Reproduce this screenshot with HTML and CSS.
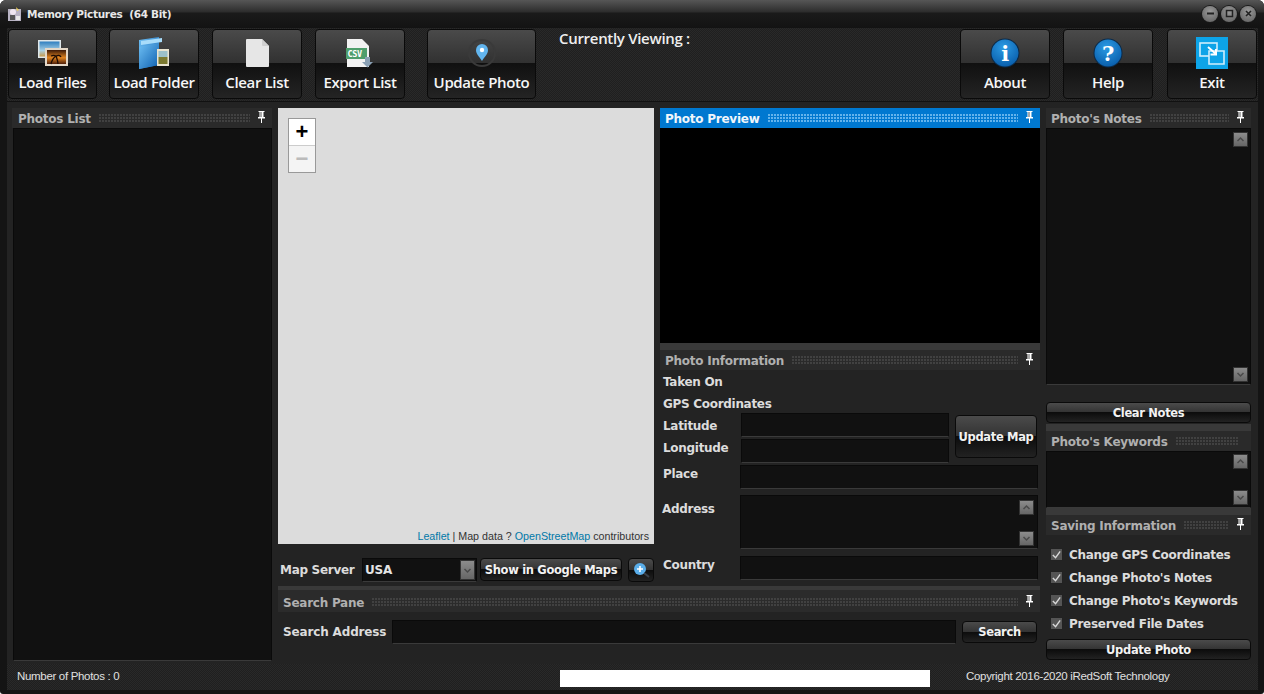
FILE: index.html
```html
<!DOCTYPE html>
<html lang="en">
<head>
<meta charset="utf-8">
<title>Memory Pictures</title>
<link rel="stylesheet" href="styles.css">
</head>
<body>
<svg class="defs" width="0" height="0" aria-hidden="true">
  <defs>
    <symbol id="pin" viewBox="0 0 9 12"><path d="M1.500 0h6v1h-1v5H8v1.500H5V12H4V7.500H1V6h1.500V1h-1z" fill="#fff"/><rect x="3.500" y="1" width="1" height="5" fill="#555"/></symbol>
    <symbol id="up" viewBox="0 0 15 15"><path d="M4.500 9 7.500 6l3 3" fill="none" stroke="#4a4a4a" stroke-width="1.500"/></symbol>
    <symbol id="down" viewBox="0 0 15 15"><path d="M4.500 6l3 3 3-3" fill="none" stroke="#4a4a4a" stroke-width="1.500"/></symbol>
    <linearGradient id="sky" x1="0" y1="0" x2="0" y2="1"><stop offset="0" stop-color="#2f7fc0"/><stop offset=".6" stop-color="#a8d0e4"/><stop offset="1" stop-color="#c79a4a"/></linearGradient>
    <linearGradient id="sunset" x1="0" y1="0" x2="0" y2="1"><stop offset="0" stop-color="#3a1808"/><stop offset=".55" stop-color="#e08420"/><stop offset="1" stop-color="#50200a"/></linearGradient>
    <linearGradient id="folder" x1="0" y1="0" x2="1" y2="1"><stop offset="0" stop-color="#6fc0f4"/><stop offset="1" stop-color="#0d5fb0"/></linearGradient>
    <radialGradient id="orb" cx=".45" cy=".3" r=".8"><stop offset="0" stop-color="#2c9be4"/><stop offset="1" stop-color="#0557a5"/></radialGradient>
  </defs>
</svg>
<div class="window">
  <header class="titlebar">
    <svg class="app-icon" width="15" height="16" viewBox="0 0 15 16"><rect x="1" y="3" width="13" height="12" fill="#b9b4c4"/><rect x="3" y="9" width="5" height="5" fill="#555"/><circle cx="6" cy="6" r="3" fill="#efe6f0"/><path d="M9 1l3 3-2 1z" fill="#f2d35a"/><rect x="9" y="10" width="4" height="4" fill="#e8e8e8"/></svg>
    <span class="app-title">Memory Pictures&nbsp; (64 Bit)</span>
    <div class="win-buttons">
      <span class="win-btn"><svg width="9" height="9" viewBox="0 0 9 9"><rect x="1" y="3.500" width="7" height="2" fill="#222"/></svg></span>
      <span class="win-btn"><svg width="9" height="9" viewBox="0 0 9 9"><rect x="1.500" y="1.500" width="6" height="6" fill="none" stroke="#222" stroke-width="1.500"/></svg></span>
      <span class="win-btn"><svg width="9" height="9" viewBox="0 0 9 9"><path d="M2 2l5 5M7 2l-5 5" stroke="#222" stroke-width="1.600"/></svg></span>
    </div>
  </header>

  <nav class="toolbar">
    <button class="tool w89">
      <svg class="tool-icon" width="32" height="30" viewBox="0 0 32 30"><rect x="1" y="2" width="23" height="18" fill="#dfe7ea"/><rect x="2.500" y="3.500" width="20" height="15" fill="url(#sky)"/><rect x="8" y="10" width="23" height="18" fill="#e4d8c8"/><rect x="10" y="12" width="19" height="14" fill="url(#sunset)"/><path d="M14 26c1-4 2-6 5-8M19 18c-2-1-3-1-5 0M19 18c2-1 4-1 5 1M19 18c1 3 2 5 2 8" stroke="#1d0c04" stroke-width="1.300" fill="none"/></svg>
      <span>Load Files</span>
    </button>
    <button class="tool w90 gap12">
      <svg class="tool-icon" width="32" height="32" viewBox="0 0 32 32"><path d="M1 3 21 0v28L1 32z" fill="url(#folder)"/><path d="M3 4 24 1v4L3 8z" fill="#a8dcfa"/><path d="M1 10 21 6v22L1 32z" fill="url(#folder)"/><rect x="19" y="12" width="12" height="17" fill="#e9e4d0"/><rect x="20.500" y="14" width="9" height="6" fill="#9cc0c8"/><rect x="20.500" y="20" width="9" height="7" fill="#7c7a30"/></svg>
      <span>Load Folder</span>
    </button>
    <button class="tool w90 gap13">
      <svg class="tool-icon" width="24" height="30" viewBox="0 0 24 30"><path d="M1 2a1 1 0 0 1 1-1h15l7 7v20a1 1 0 0 1-1 1H2a1 1 0 0 1-1-1z" fill="#e6e6e6"/><path d="M17 1l7 7h-6a1 1 0 0 1-1-1z" fill="#cfcfcf"/></svg>
      <span>Clear List</span>
    </button>
    <button class="tool w90 gap13">
      <svg class="tool-icon" width="30" height="30" viewBox="0 0 30 30"><path d="M2 1h15l7 7v21H2z" fill="#f2f2f2"/><rect x="1" y="10" width="21" height="11" fill="#4f9e6c"/><text x="2.500" y="19" class="csv">CSV</text><rect x="20" y="19" width="5" height="6" fill="#8aa0b4"/><path d="M17 24h11l-5.500 5.500z" fill="#8aa0b4"/></svg>
      <span>Export List</span>
    </button>
    <button class="tool w109 gap22">
      <svg class="tool-icon" width="30" height="30" viewBox="0 0 30 30"><circle cx="15" cy="15" r="13" fill="none" stroke="#3a3a3a" stroke-width="2"/><path d="M15 23c-3-5-6-7-6-11a6 6 0 0 1 12 0c0 4-3 6-6 11z" fill="#62b5ee"/><circle cx="15" cy="12" r="2.200" fill="#fff"/></svg>
      <span>Update Photo</span>
    </button>
    <div class="viewing">Currently Viewing :</div>
    <button class="tool w90">
      <svg class="tool-icon" width="30" height="30" viewBox="0 0 30 30"><circle cx="15" cy="15" r="14.500" fill="#0b2a48"/><circle cx="15" cy="15" r="13.500" fill="url(#orb)"/><text x="15" y="23" class="glyph">i</text></svg>
      <span>About</span>
    </button>
    <button class="tool w90 gap13">
      <svg class="tool-icon" width="30" height="30" viewBox="0 0 30 30"><circle cx="15" cy="15" r="14.500" fill="#0b2a48"/><circle cx="15" cy="15" r="13.500" fill="url(#orb)"/><text x="15" y="23" class="glyph">?</text></svg>
      <span>Help</span>
    </button>
    <button class="tool w90 gap14">
      <svg class="tool-icon" width="32" height="32" viewBox="0 0 32 32"><rect width="32" height="32" fill="#0da4e8"/><rect x="4" y="6" width="17" height="13" fill="none" stroke="#cfeefc" stroke-width="1.600"/><path d="M13 14h15v13H13z" fill="#0da4e8" stroke="#cfeefc" stroke-width="1.600"/><path d="M12 10l8 7m0-5v5.500h-5.500" fill="none" stroke="#fff" stroke-width="2"/></svg>
      <span>Exit</span>
    </button>
  </nav>

  <main class="workspace">
    <section class="col-list">
      <div class="pane-head"><b>Photos List</b><i class="dots"></i><svg class="pin"><use href="#pin"/></svg></div>
      <div class="well list-well"></div>
    </section>

    <div class="col-center">
      <div class="center-top">
        <div class="col-map">
          <div class="map">
            <div class="zoom-ctl">
              <span class="zoom-in">+</span>
              <span class="zoom-out">&minus;</span>
            </div>
            <div class="attrib"><a>Leaflet</a> | Map data ? <a>OpenStreetMap</a> contributors</div>
          </div>
          <div class="map-row">
            <label class="lbl map-lbl">Map Server</label>
            <div class="select well"><span>USA</span><span class="sb"><svg width="15" height="20"><use href="#down" y="3" width="15" height="15"/></svg></span></div>
            <button class="btn gmaps">Show in Google Maps</button>
            <button class="btn zoom-btn"><svg width="18" height="18" viewBox="0 0 18 18"><circle cx="8" cy="8" r="6" fill="#5aaeea"/><path d="M8 5v6M5 8h6" stroke="#fff" stroke-width="1.600"/><path d="M12 12l5 4" stroke="#3a4048" stroke-width="2"/></svg></button>
          </div>
        </div>

        <div class="col-photo">
          <div class="pane-head active"><b>Photo Preview</b><i class="dots"></i><svg class="pin"><use href="#pin"/></svg></div>
          <div class="preview"></div>
          <div class="band b7"></div>
          <div class="pane-head"><b>Photo Information</b><i class="dots"></i><svg class="pin"><use href="#pin"/></svg></div>
          <div class="info">
            <div class="info-line lbl">Taken On</div>
            <div class="info-line lbl">GPS Coordinates</div>
            <div class="latlon">
              <div class="latlon-labels">
                <div class="info-line lbl">Latitude</div>
                <div class="info-line lbl">Longitude</div>
              </div>
              <div class="latlon-fields">
                <div class="well field"></div>
                <div class="well field"></div>
              </div>
              <button class="btn update-map">Update Map</button>
            </div>
            <div class="info-row place"><span class="lbl">Place</span><div class="well wide h23"></div></div>
            <div class="info-row address"><span class="lbl addr-lbl">Address</span>
              <div class="well wide h54 scroll"><span class="sb"><svg width="15" height="15"><use href="#up"/></svg></span><span class="sb"><svg width="15" height="15"><use href="#down"/></svg></span></div>
            </div>
            <div class="info-row country"><span class="lbl">Country</span><div class="well wide h23"></div></div>
          </div>
        </div>
      </div>

      <div class="band b4"></div>
      <div class="pane-head search-head"><b>Search Pane</b><i class="dots"></i><svg class="pin"><use href="#pin"/></svg></div>
      <div class="search-row">
        <label class="lbl search-lbl">Search Address</label>
        <div class="well search-field"></div>
        <button class="btn search-btn">Search</button>
      </div>
    </div>

    <aside class="col-right">
      <div class="pane-head"><b>Photo's Notes</b><i class="dots"></i><svg class="pin"><use href="#pin"/></svg></div>
      <div class="well notes scroll"><span class="sb"><svg width="15" height="15"><use href="#up"/></svg></span><span class="sb"><svg width="15" height="15"><use href="#down"/></svg></span></div>
      <button class="btn long clear-notes">Clear Notes</button>
      <div class="band b7 kw-band"></div>
      <div class="pane-head"><b>Photo's Keywords</b><i class="dots"></i></div>
      <div class="well keywords scroll"><span class="sb"><svg width="15" height="15"><use href="#up"/></svg></span><span class="sb"><svg width="15" height="15"><use href="#down"/></svg></span></div>
      <div class="band b7"></div>
      <div class="pane-head"><b>Saving Information</b><i class="dots"></i><svg class="pin"><use href="#pin"/></svg></div>
      <ul class="checks">
        <li><span class="check"><svg width="12" height="12" viewBox="0 0 12 12"><path d="M2 6l3 3 5-7" fill="none" stroke="#d8d8d8" stroke-width="1.500"/></svg></span>Change GPS Coordinates</li>
        <li><span class="check"><svg width="12" height="12" viewBox="0 0 12 12"><path d="M2 6l3 3 5-7" fill="none" stroke="#d8d8d8" stroke-width="1.500"/></svg></span>Change Photo's Notes</li>
        <li><span class="check"><svg width="12" height="12" viewBox="0 0 12 12"><path d="M2 6l3 3 5-7" fill="none" stroke="#d8d8d8" stroke-width="1.500"/></svg></span>Change Photo's Keywords</li>
        <li><span class="check"><svg width="12" height="12" viewBox="0 0 12 12"><path d="M2 6l3 3 5-7" fill="none" stroke="#d8d8d8" stroke-width="1.500"/></svg></span>Preserved File Dates</li>
      </ul>
      <button class="btn long">Update Photo</button>
    </aside>
  </main>

  <footer class="statusbar">
    <span class="count">Number of Photos : 0</span>
    <div class="progress"></div>
    <span class="copyright">Copyright 2016-2020 iRedSoft Technology</span>
  </footer>
</div>
</body>
</html>
```

FILE: styles.css
```css
* { box-sizing: border-box; }
html, body { margin: 0; height: 100%; background: #fff; overflow: hidden; }
.defs { display: block; height: 0; }
.window {
  width: 1264px; height: 694px; background: #141414;
  border-radius: 6px 6px 3px 3px; overflow: hidden;
  display: flex; flex-direction: column;
  padding: 0 6px 4px 7px;
  font-family: "DejaVu Sans", sans-serif;
}
.titlebar {
  height: 28px; margin: 0 -6px 0 -7px; padding: 0 6px 0 7px;
  display: flex; align-items: center;
  background: linear-gradient(#565656 0, #2c2c2c 12px, #1a1a1a 13px, #131313 28px);
}
.app-icon { margin-right: 5px; flex: none; }
.app-title { font: bold 10.500px "DejaVu Sans", sans-serif; color: #e8e8e8; letter-spacing: -.3px; }
.win-buttons { margin-left: auto; display: flex; gap: 3px; margin-right: 2px; margin-top: -1px; }
.win-btn {
  width: 16px; height: 16px; border-radius: 50%;
  background: radial-gradient(circle at 50% 35%, #9a9a9a, #5c5c5c);
  box-shadow: 0 0 0 1px #1a1a1a;
  display: flex; align-items: center; justify-content: center;
}
.toolbar, .statusbar {
  background-color: #232323;
  background-image: repeating-conic-gradient(#292929 0 25%, #1f1f1f 0 50%);
  background-size: 2px 2px;
}
.toolbar {
  height: 74px; flex: none; display: flex; align-items: flex-start;
  padding: 1px 0 0 1px; border-bottom: 1px solid #111;
}
.tool {
  height: 70px; padding: 0; display: flex; flex-direction: column; align-items: center;
  border: 1px solid #0a0a0a; border-radius: 4px; color: #f6f6f6;
  background: linear-gradient(#4a4a4a 0, #313131 33px, #101010 33px, #242424 100%);
  font: 600 15px "Open Sans", sans-serif; letter-spacing: -.35px;
}
.tool-icon { height: 32px; margin-top: 7px; }
.tool span { margin-top: auto; margin-bottom: 6px; line-height: 20px; white-space: nowrap; }
.w89 { width: 89px; margin-right: 12px; }
.w90 { width: 90px; }
.w109 { width: 109px; }
.gap13 { margin-left: 13px; }
.gap14 { margin-left: 14px; }
.gap22 { margin-left: 22px; }
.viewing { margin-left: 23px; margin-right: auto; font: 600 15px/19px "Open Sans", sans-serif; letter-spacing: -.3px; color: #eee; }
.toolbar > .tool:last-child { margin-right: 1px; }

.workspace { flex: 1; display: flex; min-height: 0; background: #232323; padding: 6px 0 3px 6px; }
.col-list { width: 259px; margin-right: 6px; display: flex; flex-direction: column; }
.col-center { width: 762px; margin-right: 6px; display: flex; flex-direction: column; }
.col-right { width: 205px; display: flex; flex-direction: column; }

.pane-head { height: 20px; flex: none; display: flex; align-items: center; padding: 1px 5px 0; color: #b0b0b0; background: #2a2a2a; }
.pane-head b { font: bold 12px "DejaVu Sans", sans-serif; letter-spacing: -.25px; white-space: nowrap; }
.dots {
  flex: 1; height: 9px; margin: 0 7px 0 8px;
  background-image: radial-gradient(circle at 1px 1px, #414141 .8px, transparent 1px); background-size: 3px 3px;
}
.pin { width: 9px; height: 12px; flex: none; margin: -3px 1px 0 0; }
.active { background: #0078d0; color: #f0f6fb; }
.active .dots { background-image: radial-gradient(circle at 1px 1px, #63b3ec .8px, transparent 1px); }
.col-list > .pane-head { margin-left: -1px; padding-left: 6px; }
.well { background: #111; border: 1px solid #0a0a0a; border-bottom-color: #3a3a3a; }
.list-well { flex: 1; }
.band { flex: none; background: #393939; }
.b7 { height: 7px; }
.b4 { height: 4px; }

.center-top { display: flex; gap: 6px; height: 478px; flex: none; }
.col-map { width: 376px; display: flex; flex-direction: column; }
.map { height: 436px; background: #dcdcdc; padding: 10px; display: flex; flex-direction: column; justify-content: space-between; align-items: flex-start; }
.zoom-ctl { width: 28px; height: 55px; border: 1px solid #999; display: flex; flex-direction: column; background: #fff; }
.zoom-in, .zoom-out { flex: none; display: flex; align-items: center; justify-content: center; font: bold 22px "Liberation Sans", sans-serif; color: #000; }
.zoom-in { height: 26px; }
.zoom-out { height: 27px; background: #f4f4f4; color: #bbb; border-top: 1px solid #ccc; }
.attrib { align-self: flex-end; margin: 0 -5px -9px 0; font: 10.700px/14px "Liberation Sans", sans-serif; color: #333; }
.attrib a { color: #0078a8; }
.map-row { flex: 1; display: flex; align-items: center; padding: 9px 0 0 2px; }
.lbl { font: bold 12px "DejaVu Sans", sans-serif; color: #dcdcdc; letter-spacing: -.3px; white-space: nowrap; }
.map-lbl { width: 82px; }
.search-lbl { letter-spacing: -.15px; }
.select { width: 115px; height: 24px; display: flex; align-items: center; justify-content: space-between; padding: 0 0 0 2px; color: #e4e4e4; font: bold 12px "DejaVu Sans", sans-serif; letter-spacing: -.2px; }
.sb { width: 15px; height: 15px; background: linear-gradient(#8c8c8c, #666); border: 1px solid #333; display: block; flex: none; }
.sb svg { display: block; margin: -1px; }
.select .sb { height: 20px; margin-right: 1px; }
.btn {
  padding: 0; border: 1px solid #0a0a0a; border-radius: 4px; color: #f2f2f2;
  background: linear-gradient(#4b4b4b 0, #333 49%, #0c0c0c 50%, #222 100%);
  font: bold 11.500px "DejaVu Sans", sans-serif; letter-spacing: -.33px; white-space: nowrap;
}
.gmaps { width: 142px; height: 23px; margin-left: 3px; }
.zoom-btn { width: 26px; height: 24px; margin-left: 6px; display: flex; align-items: center; justify-content: center; }

.col-photo { width: 380px; display: flex; flex-direction: column; }
.preview { height: 215px; flex: none; background: #000; }
.info { flex: 1; background: #232323; padding: 0 2px 0 3px; }
.info-line { height: 22px; line-height: 24px; }
.latlon { display: flex; height: 52px; margin-top: -1px; }
.latlon-labels { width: 78px; flex: none; padding-top: 1px; }
.latlon-fields { width: 208px; flex: none; display: flex; flex-direction: column; gap: 2px; }
.field { height: 24px; }
.update-map { width: 82px; height: 43px; margin: 2px 0 0 6px; }
.info-row { display: flex; }
.info-row .lbl { width: 77px; flex: none; }
.wide { flex: 1; }
.h23 { height: 24px; }
.h54 { height: 54px; }
.place { margin-top: 0; height: 30px; }
.place .lbl { padding-top: 2px; }
.address { height: 61px; }
.addr-lbl { padding-top: 7px; margin-left: -1px; margin-right: 1px; }
.country { height: 24px; }
.country .lbl { padding-top: 2px; }
.scroll { display: flex; flex-direction: column; justify-content: space-between; align-items: flex-end; padding: 4px 3px 2px 0; }

.search-head { background: #2b2b2b; height: 22px; padding-top: 3px; }
.search-row { flex: 1; display: flex; align-items: center; padding: 0 3px 10px 5px; background: #232323; }
.search-row .lbl { width: 109px; flex: none; }
.search-field { width: 564px; height: 24px; flex: none; }
.search-btn { width: 75px; height: 22px; margin-left: 6px; }

.notes { height: 257px; flex: none; padding: 3px 2px 2px 0; }
.long { width: 100%; height: 21px; flex: none; }
.clear-notes { margin-top: 17px; }
.kw-band { margin-top: 1px; }
.keywords { height: 57px; flex: none; padding: 2px 2px 2px 0; }
.checks { list-style: none; margin: 0; padding: 8px 0 0 4px; flex: none; height: 104px; }
.checks li { height: 23px; display: flex; align-items: center; font: bold 12px "DejaVu Sans", sans-serif; color: #dcdcdc; letter-spacing: -.3px; white-space: nowrap; }
.check { width: 13px; height: 13px; margin-right: 6px; background: #555; border: 1px solid #222; display: flex; align-items: center; justify-content: center; flex: none; }

.statusbar { height: 26px; flex: none; display: flex; align-items: center; padding-left: 10px; font: 11.500px "Liberation Sans", sans-serif; letter-spacing: -.32px; color: #e0e0e0; }
.count { width: 543px; flex: none; margin-top: -3px; }
.progress { width: 370px; height: 17px; background: #fff; margin-top: 2px; flex: none; }
.copyright { margin: -3px 0 0 36px; white-space: nowrap; }
.csv { font: bold 8.500px "DejaVu Sans Mono", monospace; fill: #fff; }
.glyph { font: bold 21px "DejaVu Serif", serif; fill: #fff; text-anchor: middle; }
```
